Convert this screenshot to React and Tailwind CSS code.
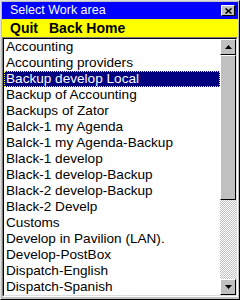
import React from 'react';

const items = [
  'Accounting',
  'Accounting providers',
  'Backup develop Local',
  'Backup of Accounting',
  'Backups of Zator',
  'Balck-1 my Agenda',
  'Balck-1 my Agenda-Backup',
  'Black-1 develop',
  'Black-1 develop-Backup',
  'Black-2 develop-Backup',
  'Black-2 Develp',
  'Customs',
  'Develop in Pavilion (LAN).',
  'Develop-PostBox',
  'Dispatch-English',
  'Dispatch-Spanish',
];

function ArrowButton({ down }) {
  return (
    <div className="h-[16px] w-[16px] bg-[#c0c0c0] border-t border-l border-t-white border-l-white border-r border-b border-r-black border-b-black flex items-center justify-center">
      <svg width="7" height="4" viewBox="0 0 7 4">
        {down ? <path d="M0 0h7L3.5 4z" fill="#000" /> : <path d="M0 4h7L3.5 0z" fill="#000" />}
      </svg>
    </div>
  );
}

export default function App() {
  return (
    <div
      className="w-[240px] h-[300px] bg-[#c0c0c0] flex flex-col border-l border-t border-l-[#dfdfdf] border-t-[#dfdfdf] border-r border-b border-r-black border-b-black pl-[1px] pt-[1px] pr-[1px] pb-[2px]"
      style={{ fontFamily: '"Liberation Sans", Arial, sans-serif' }}
    >
      <div className="h-[17px] bg-[#0000ff] flex items-center justify-between pl-[8px] pr-[3px]">
        <span className="text-white text-[12.5px] leading-none">Select Work area</span>
        <div className="w-[14px] h-[11px] bg-[#c0c0c0] border-t border-l border-t-white border-l-white border-r border-b border-r-black border-b-black flex items-center justify-center">
          <svg width="7" height="6" viewBox="0 0 7 6">
            <path d="M0.5 0.5L6.5 5.5M6.5 0.5L0.5 5.5" stroke="#000" strokeWidth="1.6" />
          </svg>
        </div>
      </div>
      <div className="h-[18px] bg-[#ffff00] flex items-center gap-[11px] pl-[8px] text-[14px] font-bold text-black">
        <span>Quit</span>
        <span>Back Home</span>
      </div>
      <div className="flex-1 flex border-t border-l border-t-[#808080] border-l-[#808080] border-r border-b border-r-white border-b-white min-h-0">
        <div className="flex-1 flex border-t border-l border-t-black border-l-black border-r border-b border-r-[#dfdfdf] border-b-[#dfdfdf] bg-white min-h-0">
          <div className="flex-1 overflow-hidden">
            {items.map((it, i) => (
              <div
                key={it}
                className={
                  'h-[16px] leading-[16px] text-[13.6px] pl-[2px] whitespace-nowrap ' +
                  (i === 2 ? 'bg-[#000080] text-white outline outline-1 outline-dotted outline-[#ffff00] -outline-offset-1' : 'text-black')
                }
              >
                {it}
              </div>
            ))}
          </div>
          <div className="w-[16px] flex flex-col">
            <ArrowButton />
            <div className="h-[145px] bg-[#c0c0c0] border-t border-l border-t-white border-l-white border-r border-b border-r-black border-b-black" />
            <div
              className="flex-1"
              style={{
                backgroundColor: '#ffffff',
                backgroundImage: 'conic-gradient(#c0c0c0 25%, #fff 0 50%, #c0c0c0 0 75%, #fff 0)',
                backgroundSize: '2px 2px',
              }}
            />
            <ArrowButton down />
          </div>
        </div>
      </div>
    </div>
  );
}
